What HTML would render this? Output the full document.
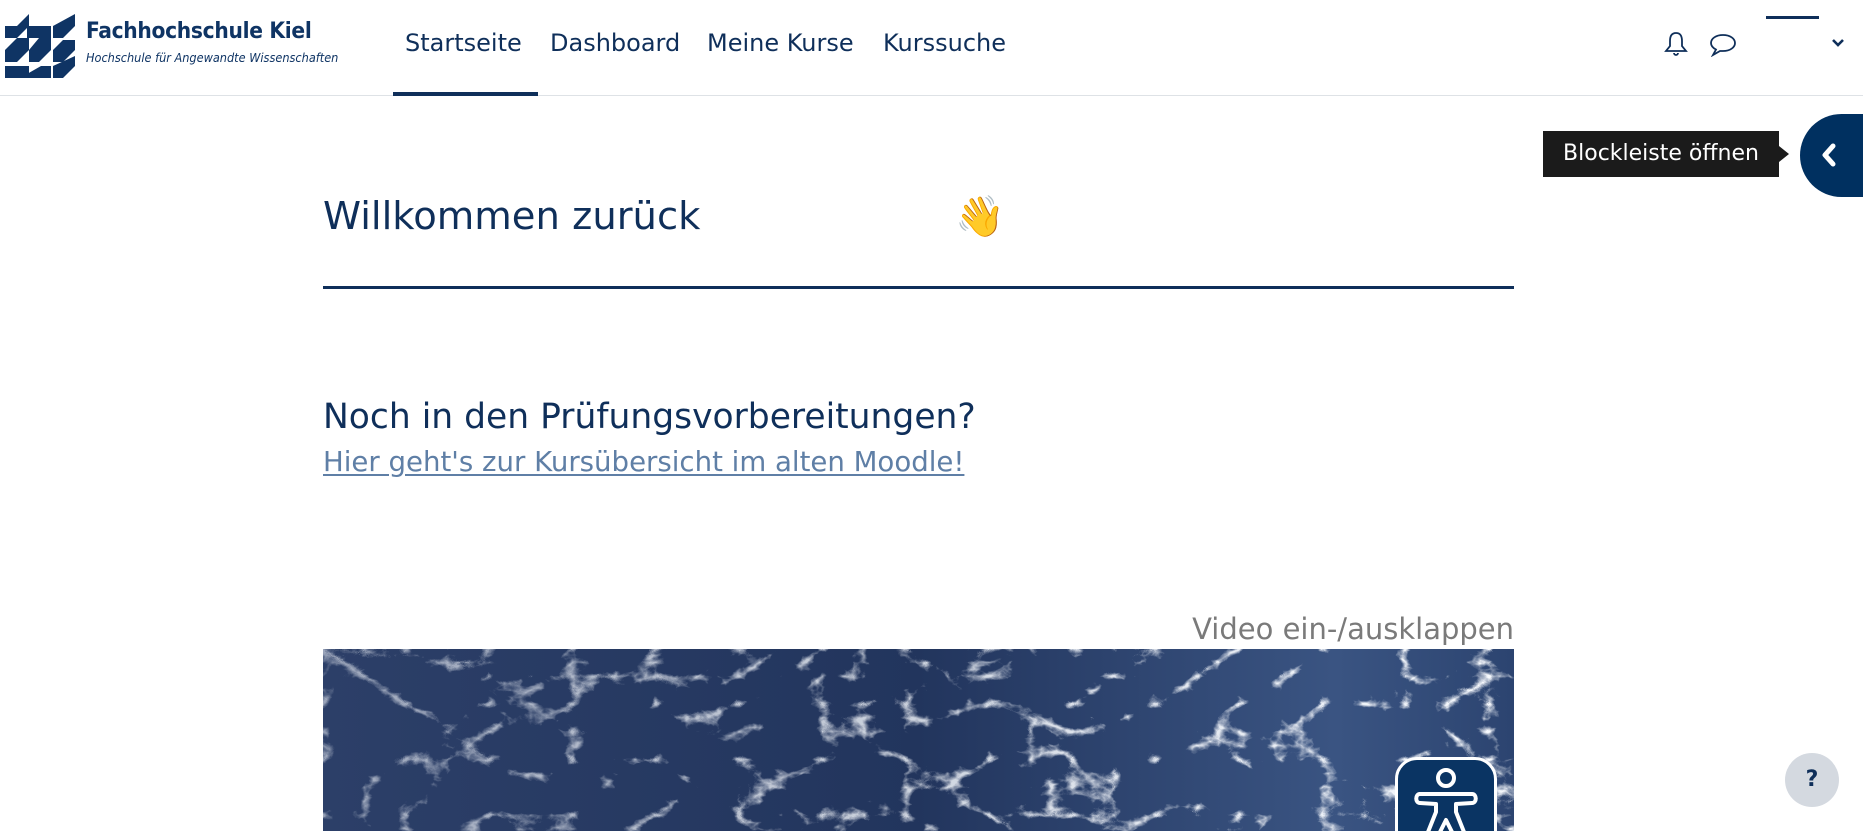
<!DOCTYPE html>
<html><head><meta charset="utf-8"><style>
*{margin:0;padding:0;box-sizing:border-box}
html,body{width:1863px;height:831px;overflow:hidden;background:#fff;font-family:"DejaVu Sans","Liberation Sans",sans-serif;color:#0f2f5a}
#w{position:relative;width:1863px;height:831px;overflow:hidden}
.abs{position:absolute}
.nav{position:absolute;top:28px;font-size:24px;color:#0f2f5a;white-space:nowrap;line-height:30px}
</style></head><body><div id="w">
<div class="abs" style="left:0;top:95px;width:1863px;height:1px;background:#dee2e6"></div>
<svg class="abs" style="left:5px;top:10px" width="70" height="68" viewBox="0 0 70 68">
<g fill="#0f3464">
<path d="M0 16 L12 16 L24 4 L24 16 L12 28 L0 28Z"/>
<path d="M22 16 L46 16 L46 28 L22 28Z"/>
<path d="M48 16 L70 4 L70 16 L58 28 L48 28Z"/>
<path d="M0 40 L12 28 L24 28 L24 40 L12 52 L0 52Z"/>
<path d="M34 28 L46 28 L46 40 L34 52 L24 52 L24 40Z"/>
<path d="M48 40 L58 30 L70 30 L70 40 L58 52 L48 52Z"/>
<path d="M0 56 L24 56 L24 68 L0 68Z"/>
<path d="M36 56 L46 56 L46 68 L22 68 L22 64Z"/>
<path d="M48 56 L70 46 L70 56 L58 68 L48 68Z"/>
</g></svg>
<div class="abs" style="left:86px;top:18px;font-family:'DejaVu Sans Condensed','DejaVu Sans',sans-serif;font-weight:bold;font-size:22.5px;color:#0f3464;letter-spacing:-0.3px">Fachhochschule Kiel</div>
<div class="abs" style="left:86px;top:50px;font-family:'DejaVu Sans Condensed','DejaVu Sans',sans-serif;font-style:italic;font-size:12.6px;color:#0f3464">Hochschule für Angewandte Wissenschaften</div>
<div class="nav" style="left:405px">Startseite</div>
<div class="nav" style="left:550px">Dashboard</div>
<div class="nav" style="left:707px">Meine Kurse</div>
<div class="nav" style="left:883px">Kurssuche</div>
<div class="abs" style="left:393px;top:92px;width:145px;height:4px;background:#0f2f5a"></div>
<svg class="abs" style="left:1663px;top:31px" width="26" height="26" viewBox="0 0 26 26" fill="none" stroke="#0f2f5a" stroke-width="1.8"><path d="M13 2 C8 2 7 6 7 10 L7 15 L3 20 L23 20 L19 15 L19 10 C19 6 18 2 13 2Z"/><path d="M11 22 a2 2 0 0 0 4 0"/></svg>
<svg class="abs" style="left:1709px;top:33px" width="28" height="24" viewBox="0 0 28 24" fill="none" stroke="#0f2f5a" stroke-width="1.8"><path d="M14 2 C7 2 2 5.5 2 10 C2 13 4 15 7 16.5 L4 22 L11 18 C12 18 13 18 14 18 C21 18 26 14.5 26 10 C26 5.5 21 2 14 2Z"/></svg>
<div class="abs" style="left:1766px;top:16px;width:53px;height:3px;background:#0f2f5a"></div>
<svg class="abs" style="left:1831px;top:38px" width="14" height="10" viewBox="0 0 14 10" fill="none" stroke="#0f2f5a" stroke-width="2.6"><path d="M2 2 L7 7 L12 2"/></svg>
<div class="abs" style="left:1543px;top:131px;width:236px;height:46px;background:#1b1b1b;color:#fff;font-size:22px;line-height:46px;text-align:center">Blockleiste öffnen</div>
<div class="abs" style="left:1779px;top:146px;width:0;height:0;border-top:8px solid transparent;border-bottom:8px solid transparent;border-left:10px solid #1b1b1b"></div>
<div class="abs" style="left:1800px;top:114px;width:120px;height:83px;border-radius:42px;background:#003060"></div>
<svg class="abs" style="left:1820px;top:141px" width="18" height="28" viewBox="0 0 18 28" fill="none" stroke="#fff" stroke-width="5" stroke-linecap="round" stroke-linejoin="round"><path d="M13 5 L5 14 L13 23"/></svg>
<div class="abs" style="left:323px;top:193px;font-size:38.5px;line-height:48px;color:#0f2f5a">Willkommen zurück</div>
<div class="abs" style="left:955px;top:193px;font-size:40px;line-height:48px">👋</div>
<div class="abs" style="left:323px;top:286px;width:1191px;height:3px;background:#0f2f5a"></div>
<div class="abs" style="left:323px;top:395px;font-size:34.5px;line-height:44px;color:#0f2f5a">Noch in den Prüfungsvorbereitungen?</div>
<div class="abs" style="left:323px;top:444px;font-size:27.6px;line-height:36px;color:#5f7fa6;text-decoration:underline;text-underline-offset:3px">Hier geht's zur Kursübersicht im alten Moodle!</div>
<div class="abs" style="left:1000px;width:514px;top:611px;font-size:29px;line-height:36px;color:#7a7a7a;text-align:right">Video ein-/ausklappen</div>
<svg class="abs" style="left:323px;top:649px" width="1191" height="182" viewBox="0 0 1191 182">
<defs>
<linearGradient id="bg" x1="0" x2="1" y1="0" y2="0"><stop offset="0" stop-color="#2c3f68"/><stop offset="0.5" stop-color="#22355d"/><stop offset="0.85" stop-color="#3a5482"/><stop offset="1" stop-color="#2c4470"/></linearGradient>
<filter id="foam2" x="0" y="0" width="100%" height="100%">
<feTurbulence type="turbulence" baseFrequency="0.012 0.018" numOctaves="5" seed="3"/>
<feColorMatrix type="matrix" values="0 0 0 0 0.95  0 0 0 0 0.97  0 0 0 0 1  -7 0 0 0 1.4"/>
</filter>
<linearGradient id="mask" x1="0" x2="1"><stop offset="0" stop-color="#fff" stop-opacity="0.55"/><stop offset="0.6" stop-color="#fff" stop-opacity="0.85"/><stop offset="1" stop-color="#fff" stop-opacity="1"/></linearGradient>
<mask id="m"><rect width="1191" height="182" fill="url(#mask)"/></mask>
</defs>
<rect width="1191" height="182" fill="url(#bg)"/>
<rect width="1191" height="182" filter="url(#foam2)" mask="url(#m)"/>
</svg>
<div class="abs" style="left:1395px;top:757px;width:102px;height:100px;border-radius:22px;background:#0a3463;border:3px solid #fff"></div>
<svg class="abs" style="left:1398px;top:760px" width="96" height="71" viewBox="0 0 96 71" fill="none" stroke="#fff" stroke-width="4" stroke-linejoin="round" stroke-linecap="round">
<circle cx="48" cy="18" r="8"/>
<path d="M22 34 L74 34 C79 34 79 43 74 43 L58 44 L58 52 L66 72"/>
<path d="M22 34 C17 34 17 43 22 43 L38 44 L38 52 L30 72"/>
<path d="M42 72 L48 60 L54 72"/>
</svg>
<div class="abs" style="left:1785px;top:753px;width:54px;height:54px;border-radius:50%;background:#d4d9e0;color:#0f2f5a;font-weight:bold;font-size:22px;line-height:54px;text-align:center">?</div>
</div></body></html>
